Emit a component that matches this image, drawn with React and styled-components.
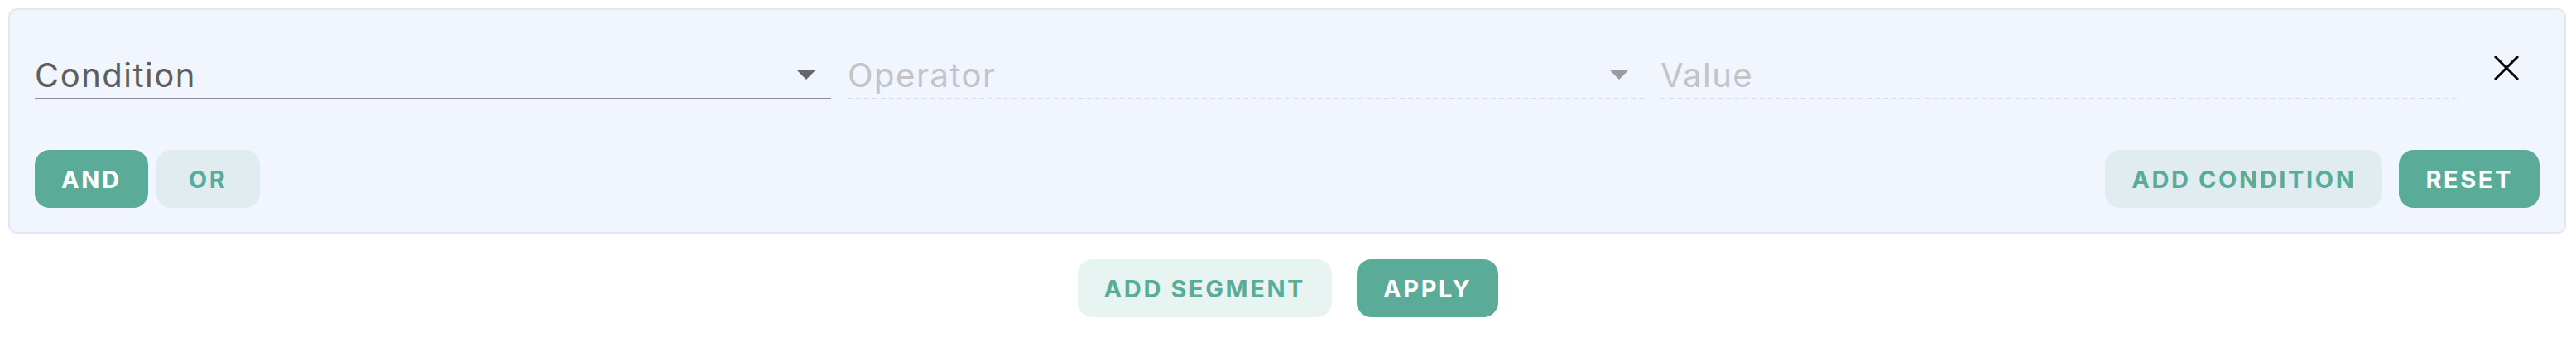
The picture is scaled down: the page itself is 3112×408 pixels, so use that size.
import React from "react"
import styled, { createGlobalStyle } from "styled-components"

const GlobalStyle = createGlobalStyle`
    html, body {
        margin: 0;
        padding: 0;
        background: #ffffff;
        font-family: Inter, "Noto Sans", sans-serif;
    }
`

const Page = styled.div`
    padding: 10px 12px 0 10px;
`

const Panel = styled.div`
    background: #f1f5fd;
    border: 2px solid #e1e8f2;
    border-radius: 10px;
    padding: 58px 30px 29px 30px;
`

const ConditionRow = styled.div`
    display: flex;
    align-items: flex-start;
    gap: 20px;
`

const Field = styled.div`
    flex: 1;
    display: flex;
    align-items: center;
    height: 48px;
    border-bottom: 2px ${props => (props.disabled ? "dashed #dcdde2" : "solid #8d8d92")};
    color: ${props => (props.disabled ? "#c3c3c8" : "#5e5e60")};
    font-size: 40px;
    letter-spacing: 1.5px;
`

const FieldLabel = styled.span`
    flex: 1;
    line-height: 40px;
    margin-top: -7px;
`

const Arrow = styled.span`
    width: 0;
    height: 0;
    margin-right: 18px;
    margin-top: -9px;
    border-left: 12px solid transparent;
    border-right: 12px solid transparent;
    border-top: 12px solid ${props => (props.light ? "#9b9b9f" : "#666668")};
`

const CloseBox = styled.div`
    width: 80px;
    height: 30px;
    margin-top: -3px;
    display: flex;
    justify-content: center;
    align-items: center;
`

const ActionRow = styled.div`
    display: flex;
    justify-content: space-between;
    margin-top: 61px;
`

const Group = styled.div`
    display: flex;
    gap: ${props => props.gap}px;
`

const Button = styled.button`
    height: 70px;
    min-width: 125px;
    padding: 0 32px;
    border: none;
    border-radius: 18px;
    font-family: Inter, "Noto Sans", sans-serif;
    font-weight: 700;
    font-size: 29px;
    letter-spacing: 2.6px;
    text-transform: uppercase;
    background: ${props => (props.primary ? "#5aab98" : props.soft)};
    color: ${props => (props.primary ? "#ffffff" : "#5aab98")};
    cursor: pointer;
`

const Footer = styled.div`
    display: flex;
    justify-content: center;
    gap: 30px;
    margin-top: 31px;
    padding-left: 2px;
`

const CloseIcon = () => (
    <svg width="30" height="30" viewBox="0 0 30 30">
        <path d="M2 2 L28 28 M28 2 L2 28" stroke="#000" strokeWidth="3" strokeLinecap="square" />
    </svg>
)

const App = () => {
    return (
        <Page>
            <GlobalStyle />
            <Panel>
                <ConditionRow>
                    <Field>
                        <FieldLabel>Condition</FieldLabel>
                        <Arrow />
                    </Field>
                    <Field disabled>
                        <FieldLabel>Operator</FieldLabel>
                        <Arrow light />
                    </Field>
                    <Field disabled>
                        <FieldLabel>Value</FieldLabel>
                    </Field>
                    <CloseBox>
                        <CloseIcon />
                    </CloseBox>
                </ConditionRow>
                <ActionRow>
                    <Group gap={10}>
                        <Button primary>And</Button>
                        <Button soft="#e1ecf1">Or</Button>
                    </Group>
                    <Group gap={20}>
                        <Button soft="#e1ecf1">Add condition</Button>
                        <Button primary>Reset</Button>
                    </Group>
                </ActionRow>
            </Panel>
            <Footer>
                <Button soft="#e8f4f1">Add segment</Button>
                <Button primary>Apply</Button>
            </Footer>
        </Page>
    )
}

export default App
